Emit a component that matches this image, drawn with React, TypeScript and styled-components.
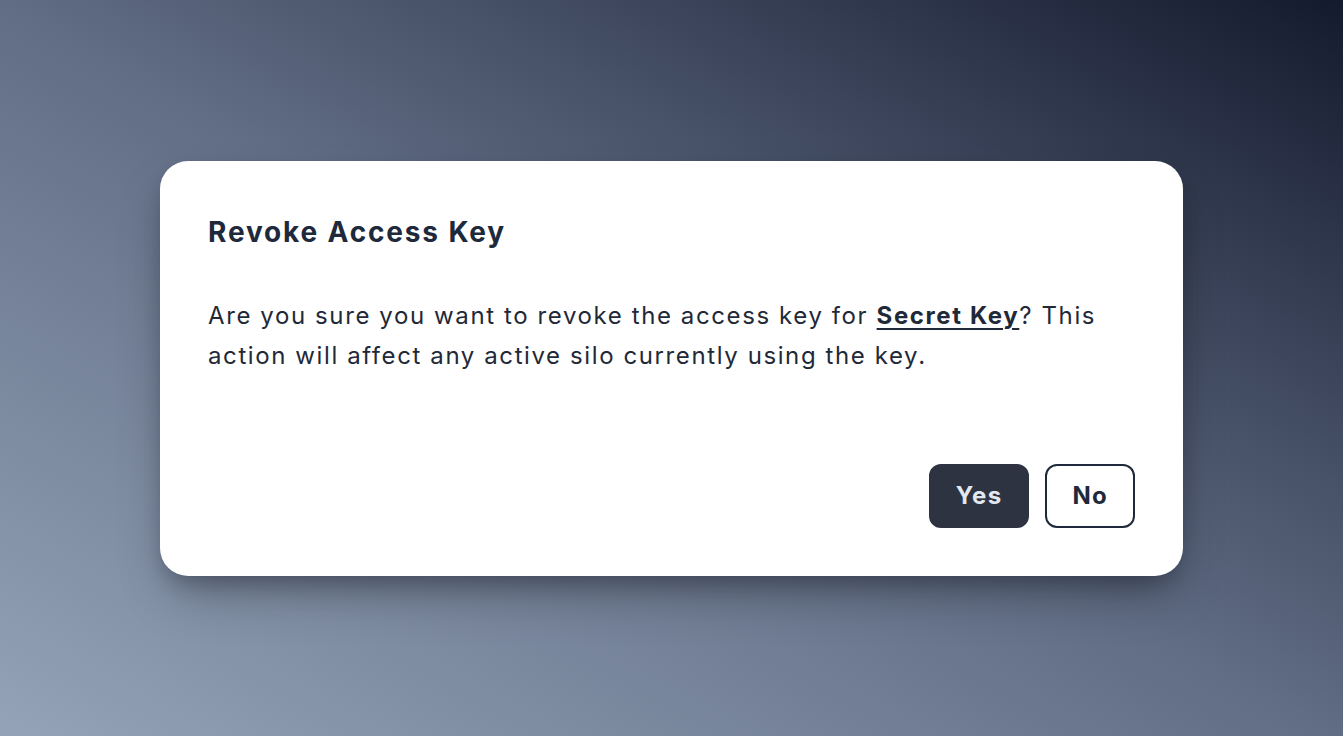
import styled, {createGlobalStyle} from "styled-components";

const GlobalStyle = createGlobalStyle`
    html, body {
        margin: 0;
        padding: 0;
        height: 100%;
    }
    body {
        font-family: Inter, "Noto Sans", sans-serif;
    }
    #root {
        height: 100%;
    }
`

const Backdrop = styled.div`
    width: 100vw;
    height: 100vh;
    display: flex;
    align-items: center;
    justify-content: center;
    background: linear-gradient(to top right, #94a3b8 0%, #616d85 50%, #141a2e 100%);
`

const Card = styled.div`
    width: 1023px;
    box-sizing: border-box;
    padding: 48px;
    background: #ffffff;
    border-radius: 28px;
    box-shadow: 0 25px 50px -12px rgba(0, 0, 0, 0.35), 0 10px 20px -5px rgba(15, 23, 42, 0.25);
    display: flex;
    flex-direction: column;
`

const Title = styled.h2`
    margin: 0;
    padding-top: 5px;
    font-size: 28px;
    line-height: 36px;
    font-weight: 700;
    letter-spacing: 1.85px;
    color: #1e293b;
`

const Message = styled.p`
    margin: 46px 0 0 0;
    font-size: 24px;
    line-height: 40px;
    letter-spacing: 1.6px;
    color: #1f2937;

    strong {
        font-weight: 700;
        text-decoration: underline;
        text-underline-offset: 4px;
        text-decoration-thickness: 2px;
    }
`

const Actions = styled.div`
    margin-top: 88px;
    display: flex;
    justify-content: flex-end;
    gap: 16px;
`

const Button = styled.button<{$primary?: boolean}>`
    height: 64px;
    box-sizing: border-box;
    padding: 0 25px;
    border-radius: 12px;
    font-family: Inter, "Noto Sans", sans-serif;
    font-size: 24px;
    font-weight: 700;
    letter-spacing: 1.3px;
    cursor: pointer;
    border: 2px solid ${p => p.$primary ? "#2d3340" : "#1e293b"};
    background: ${p => p.$primary ? "#2d3340" : "#ffffff"};
    color: ${p => p.$primary ? "#e2e8f0" : "#1e293b"};
`

export default function App() {
    return (
        <>
            <GlobalStyle/>
            <Backdrop>
                <Card>
                    <Title>Revoke Access Key</Title>
                    <Message>
                        Are you sure you want to revoke the access key for <strong>Secret Key</strong>? This
                        action will affect any active silo currently using the key.
                    </Message>
                    <Actions>
                        <Button $primary type={"button"}>Yes</Button>
                        <Button type={"button"}>No</Button>
                    </Actions>
                </Card>
            </Backdrop>
        </>
    )
}
